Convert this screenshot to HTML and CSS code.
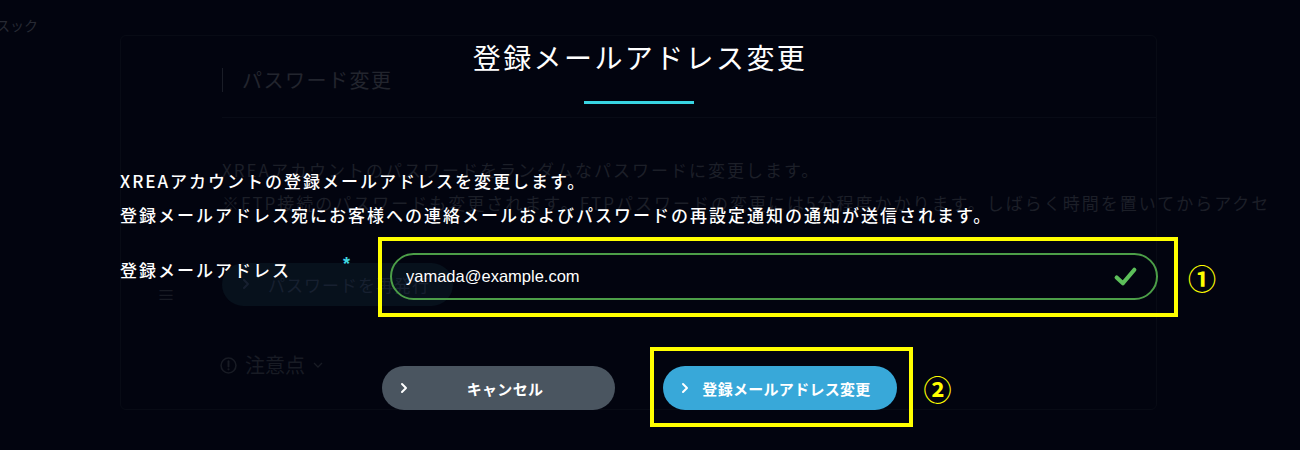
FILE: index.html
```html
<!DOCTYPE html>
<html lang="ja">
<head>
    <meta charset="UTF-8">
    <meta name="viewport" content="width=device-width, initial-scale=1.0">
    <title>登録メールアドレス変更</title>
    <link rel="stylesheet" href="styles.css">
</head>
<body>

    <!-- page behind the modal -->
    <div class="page">
        <div class="topbar">スック</div>
        <section class="card">
            <div class="card-head">
                <h2 class="card-title">パスワード変更</h2>
            </div>
            <p class="card-text">XREAアカウントのパスワードをランダムなパスワードに変更します。<br>※FTP接続のパスワードも変更されます。FTPパスワードの変更には5分程度かかります。しばらく時間を置いてからアクセ</p>
            <div class="card-action">
                <span class="handle">≡</span>
                <button class="ghost-btn">
                    <svg width="8" height="12" viewBox="0 0 8 12"><path d="M2 2 L6 6 L2 10" fill="none" stroke="currentColor" stroke-width="2" stroke-linecap="round" stroke-linejoin="round"/></svg>
                    <span>パスワードを再発行</span>
                </button>
            </div>
            <div class="notice">
                <svg width="17" height="17" viewBox="0 0 16 16"><circle cx="8" cy="8" r="7" fill="none" stroke="currentColor" stroke-width="1.5"/><path d="M8 4 V9" stroke="currentColor" stroke-width="1.8" stroke-linecap="round"/><circle cx="8" cy="11.6" r="1" fill="currentColor"/></svg>
                <span>注意点</span>
                <svg width="10" height="8" viewBox="0 0 10 8"><path d="M1 2 L5 6 L9 2" fill="none" stroke="currentColor" stroke-width="1.3"/></svg>
            </div>
        </section>
    </div>

    <!-- modal -->
    <div class="modal">
        <div class="modal-inner">
            <h1 class="modal-title">登録メールアドレス変更</h1>
            <div class="title-rule"></div>

            <p class="modal-text">XREAアカウントの登録メールアドレスを変更します。<br>登録メールアドレス宛にお客様への連絡メールおよびパスワードの再設定通知の通知が送信されます。</p>

            <div class="form-row">
                <div class="form-label">
                    <label for="email">登録メールアドレス</label>
                    <span class="required">*</span>
                </div>
                <div class="field">
                    <input type="text" id="email" value="yamada@example.com">
                    <svg class="check" width="25" height="21" viewBox="0 0 24 20"><path d="M3.5 11 L9.5 16.5 L20.5 3.5" fill="none" stroke="#5cbf5a" stroke-width="4" stroke-linecap="round" stroke-linejoin="round"/></svg>
                    <span class="mark mark-field"></span>
                    <span class="mark-num num-field">①</span>
                </div>
            </div>

            <div class="actions">
                <button class="btn cancel-btn">
                    <svg width="8" height="12" viewBox="0 0 8 12"><path d="M2 2 L6 6 L2 10" fill="none" stroke="#fff" stroke-width="2" stroke-linecap="round" stroke-linejoin="round"/></svg>
                    <span>キャンセル</span>
                </button>
                <button class="btn submit-btn">
                    <svg width="8" height="12" viewBox="0 0 8 12"><path d="M2 2 L6 6 L2 10" fill="none" stroke="#fff" stroke-width="2" stroke-linecap="round" stroke-linejoin="round"/></svg>
                    <span>登録メールアドレス変更</span>
                    <span class="mark mark-btn"></span>
                    <span class="mark-num num-btn">②</span>
                </button>
            </div>
        </div>
    </div>

</body>
</html>
```

FILE: styles.css
```css
body {
    margin: 0;
    width: 1300px;
    height: 450px;
    overflow: hidden;
    position: relative;
    background-color: #02040f;
    font-family: "Noto Sans CJK JP", sans-serif;
    color: #fff;
}

/* faint page behind */
.page {
    color: #1f222b;
}
.topbar {
    height: 35px;
    box-sizing: border-box;
    padding-top: 17px;
    margin-left: -4px;
    font-size: 14px;
    line-height: 16px;
    color: #272a34;
}
.card {
    margin-left: 120px;
    width: 1037px;
    height: 375px;
    box-sizing: border-box;
    border: 1px solid #080b15;
    border-radius: 6px;
    padding-left: 101px;
}
.card-head {
    margin-top: 32px;
    padding-bottom: 25px;
    border-bottom: 1px solid #080b16;
}
.card-title {
    margin: 0;
    padding-left: 19px;
    border-left: 1px solid #1a1d27;
    font-size: 20px;
    line-height: 24px;
    font-weight: 400;
    letter-spacing: 1.5px;
    color: #22252e;
}
.card-text {
    margin: 35px 0 0;
    font-size: 17px;
    line-height: 33px;
    letter-spacing: 2px;
    white-space: nowrap;
    color: #1c1f28;
}
.card-action {
    display: flex;
    align-items: center;
    margin: 42px 0 0 -65px;
}
.handle {
    width: 65px;
    font-size: 18px;
    margin-top: 20px;
    color: #181b24;
}
.ghost-btn {
    display: flex;
    align-items: center;
    gap: 18px;
    width: 231px;
    height: 43px;
    padding: 0 20px;
    border: none;
    border-radius: 22px;
    background-color: #07111c;
    color: #172030;
    font-family: inherit;
    font-size: 17px;
    letter-spacing: 1px;
}
.notice {
    display: flex;
    align-items: center;
    gap: 8px;
    margin-top: 46px;
    margin-left: -2px;
    font-size: 20px;
    line-height: 24px;
    color: #181b24;
}

/* modal */
.modal {
    position: absolute;
    top: 0;
    left: 0;
    right: 0;
    bottom: 0;
}
.modal-inner {
    width: 1038px;
    margin-left: 120px;
    padding-top: 37px;
}
.modal-title {
    margin: 0;
    padding-left: 2px;
    text-align: center;
    font-size: 28px;
    line-height: 40px;
    font-weight: 400;
    letter-spacing: 2.4px;
}
.title-rule {
    width: 110px;
    height: 3px;
    margin: 24px auto 0;
    background-color: #38d4e2;
}
.modal-text {
    margin: 60px 0 0;
    font-size: 17px;
    line-height: 34px;
    font-weight: 500;
    letter-spacing: 2px;
}
.form-row {
    display: flex;
    align-items: flex-start;
    margin-top: 21px;
}
.form-label {
    display: flex;
    width: 230px;
    margin-right: 40px;
    font-size: 17px;
    line-height: 34px;
    font-weight: 500;
    letter-spacing: 2px;
}
.required {
    margin-left: auto;
    margin-top: 2px;
    font-family: "Liberation Sans", sans-serif;
    font-size: 18px;
    line-height: 18px;
    font-weight: bold;
    letter-spacing: 0;
    color: #3fd6e0;
}
.field {
    position: relative;
    flex: 1;
}
.field input {
    display: block;
    width: 100%;
    height: 47px;
    box-sizing: border-box;
    padding: 0 50px 0 14px;
    border: 2px solid #4c9e48;
    border-radius: 24px;
    background: transparent;
    color: #fff;
    font-family: "Liberation Sans", Arial, sans-serif;
    font-size: 16.5px;
    outline: none;
}
.check {
    position: absolute;
    right: 20px;
    top: 13px;
}

/* yellow annotations */
.mark {
    position: absolute;
    border: 4px solid #ffff00;
    pointer-events: none;
}
.mark-field {
    top: -16px;
    bottom: -17px;
    left: -12px;
    right: -20px;
}
.mark-num {
    position: absolute;
    font-family: "Noto Sans CJK JP", sans-serif;
    font-size: 28px;
    line-height: 30px;
    font-weight: 700;
    letter-spacing: 0;
    color: #ffff00;
}
.num-field {
    left: calc(100% + 30px);
    top: 10px;
}

.actions {
    display: flex;
    justify-content: center;
    gap: 48px;
    margin-top: 66px;
}
.btn {
    position: relative;
    display: flex;
    align-items: center;
    width: 233px;
    height: 44px;
    padding: 0 12px 0 18px;
    border: none;
    border-radius: 22px;
    color: #fff;
    font-family: "Noto Sans CJK JP", sans-serif;
    font-size: 15px;
    font-weight: 700;
    letter-spacing: 0.3px;
    cursor: pointer;
}
.btn span {
    flex: 1;
    text-align: center;
}
.cancel-btn {
    background-color: #4a5560;
}
.submit-btn {
    width: 234px;
    background-color: #38a8d9;
}
.mark-btn {
    top: -19px;
    bottom: -17px;
    left: -13px;
    right: -16px;
}
.btn .mark-num {
    flex: none;
    left: calc(100% + 27px);
    top: 8px;
}
```
